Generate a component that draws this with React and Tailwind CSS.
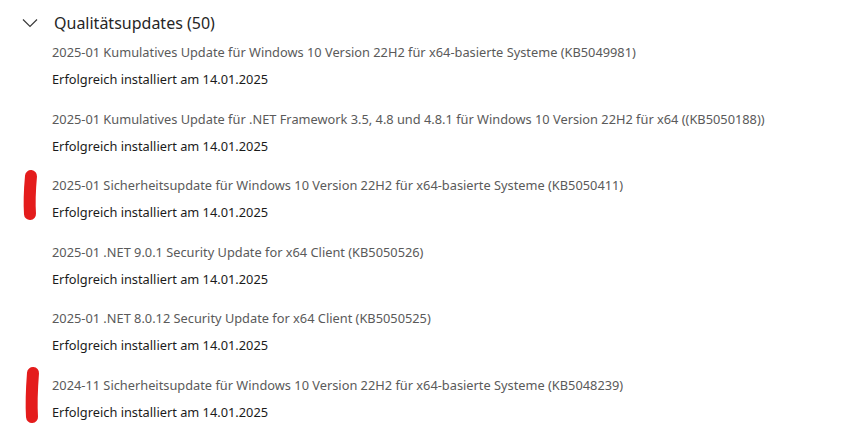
import React from 'react'

const updates = [
  { title: '2025-01 Kumulatives Update für Windows 10 Version 22H2 für x64-basierte Systeme (KB5049981)' },
  { title: '2025-01 Kumulatives Update für .NET Framework 3.5, 4.8 und 4.8.1 für Windows 10 Version 22H2 für x64 ((KB5050188))' },
  { title: '2025-01 Sicherheitsupdate für Windows 10 Version 22H2 für x64-basierte Systeme (KB5050411)', mark: true },
  { title: '2025-01 .NET 9.0.1 Security Update for x64 Client (KB5050526)' },
  { title: '2025-01 .NET 8.0.12 Security Update for x64 Client (KB5050525)' },
  { title: '2024-11 Sicherheitsupdate für Windows 10 Version 22H2 für x64-basierte Systeme (KB5048239)', mark: true, long: true },
]

function RedMark({ tall }) {
  // hand-drawn highlighter stroke
  return (
    <svg
      className={tall ? 'absolute left-[22px] top-[-13px]' : 'absolute left-[21px] top-[-10px]'}
      width="20"
      height={tall ? 58 : 52}
      viewBox={tall ? '0 0 20 58' : '0 0 20 52'}
    >
      <path
        d={tall ? 'M11 7 C10 20 9 35 10 51' : 'M10 7 C9 18 8 30 9 45'}
        stroke="#e41c1c"
        strokeWidth="12"
        strokeLinecap="round"
        fill="none"
      />
    </svg>
  )
}

export default function App() {
  return (
    <div className="w-[843px] h-[429px] bg-white overflow-hidden" style={{ fontFamily: '"Noto Sans", "Open Sans", sans-serif' }}>
      {/* Section header */}
      <div className="flex items-center h-[46px] pl-[22px]">
        <svg width="16" height="10" viewBox="0 0 16 10" fill="none" stroke="#3a3a3a" strokeWidth="1.2">
          <polyline points="1 1.5 8 8.5 15 1.5" />
        </svg>
        <span className="ml-[16px] text-[16px] text-[#262626] leading-[24px]">Qualitätsupdates (50)</span>
      </div>

      {/* Update list */}
      <div className="flex flex-col">
        {updates.map((u, i) => (
          <div key={i} className="relative h-[66.5px] pl-[52px] flex flex-col">
            {u.mark && <RedMark tall={u.long} />}
            <p className="text-[12.8px] leading-[14px] mt-[-1px] text-[#5a5a5a] whitespace-nowrap">{u.title}</p>
            <p className="text-[12.8px] leading-[14px] mt-[13px] text-[#1b1b1b] whitespace-nowrap">Erfolgreich installiert am 14.01.2025</p>
          </div>
        ))}
      </div>
    </div>
  )
}
